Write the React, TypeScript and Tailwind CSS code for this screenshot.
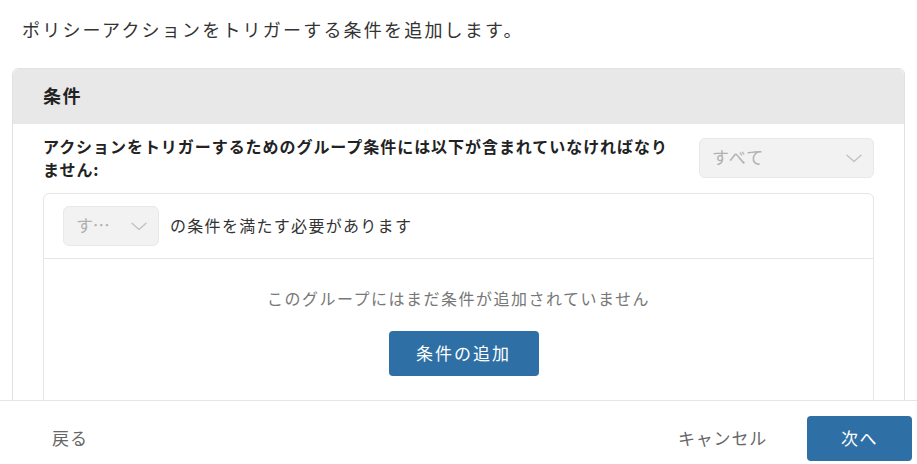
const font = { fontFamily: '"Noto Sans CJK JP", "Noto Sans", sans-serif' };

function Chevron() {
  return (
    <svg width="16" height="9" viewBox="0 0 16 9" fill="none" className="shrink-0">
      <path d="M1 1.2 8 7.6l7-6.4" stroke="#c2c2c2" strokeWidth="1.4" strokeLinecap="round" strokeLinejoin="round" />
    </svg>
  );
}

function DisabledSelect({ width, textWidth }: { width: string; textWidth: string }) {
  return (
    <div
      className={`flex h-10 shrink-0 items-center justify-between rounded-md border border-[#e8e8e8] bg-[#f2f2f2] pl-3 pr-[11px] text-[17px] tracking-[1px] text-[#b0b0b0] ${width}`}
    >
      <span className={`truncate pb-[2px] ${textWidth}`}>すべて</span>
      <Chevron />
    </div>
  );
}

export default function App() {
  return (
    <div className="flex h-[464px] w-[917px] flex-col overflow-hidden bg-white" style={font}>
      {/* Scrollable content */}
      <div className="min-h-0 flex-1 overflow-hidden px-3">
        <p className="pl-[10px] pt-[16px] text-[18px] leading-[26px] tracking-[2.2px] text-[#333]">
          ポリシーアクションをトリガーする条件を追加します。
        </p>

        <div className="mt-[26px] rounded-t-md border border-[#e2e2e2] bg-white">
          {/* Card header */}
          <div className="flex h-[55px] items-center rounded-t-md bg-[#e8e8e8] px-[30px] pb-[3px]">
            <h2 className="text-[18px] font-bold tracking-[1.5px] text-[#222]">条件</h2>
          </div>

          {/* Card body */}
          <div className="px-[30px] pt-[11px]">
            <div className="flex items-start gap-[10px]">
              <p className="flex-1 pr-[12px] text-[16px] font-bold leading-[23px] tracking-[0.95px] text-[#222]">
                アクションをトリガーするためのグループ条件には以下が含まれていなければなりません:
              </p>
              <div className="pt-[3px]">
                <DisabledSelect width="w-[175px]" textWidth="w-[100px]" />
              </div>
            </div>

            {/* Group */}
            <div className="mt-[12px] rounded-t-md border border-[#e6e6e6]">
              <div className="flex items-center gap-[11px] border-b border-[#e6e6e6] px-[19px] py-[12px]">
                <DisabledSelect width="w-[96px]" textWidth="w-[36px]" />
                <span className="pb-[3px] text-[16px] tracking-[1.3px] text-[#333]">
                  の条件を満たす必要があります
                </span>
              </div>
              <div className="flex flex-col items-center pb-[30px] pt-[26px]">
                <p className="text-[16px] leading-[26px] tracking-[1.5px] text-[#777]">
                  このグループにはまだ条件が追加されていません
                </p>
                <button
                  type="button"
                  className="ml-[10px] mt-[20px] h-[45px] w-[150px] rounded bg-[#2e6fa5] pb-[2px] text-[17px] tracking-[2px] text-white"
                >
                  条件の追加
                </button>
              </div>
            </div>
          </div>
        </div>
      </div>

      {/* Footer */}
      <div className="flex h-16 shrink-0 items-center border-t border-[#e6e6e6] pl-[52px] pr-[5px] pt-3">
        <button type="button" className="pb-[2px] text-[17px] tracking-[1px] text-[#666]">
          戻る
        </button>
        <div className="ml-auto flex items-center gap-[40px]">
          <button type="button" className="pb-[2px] text-[17px] tracking-[0.8px] text-[#666]">
            キャンセル
          </button>
          <button
            type="button"
            className="h-[45px] w-[105px] rounded bg-[#2e6fa5] pb-[2px] text-[17px] tracking-[1.5px] text-white"
          >
            次へ
          </button>
        </div>
      </div>
    </div>
  );
}
